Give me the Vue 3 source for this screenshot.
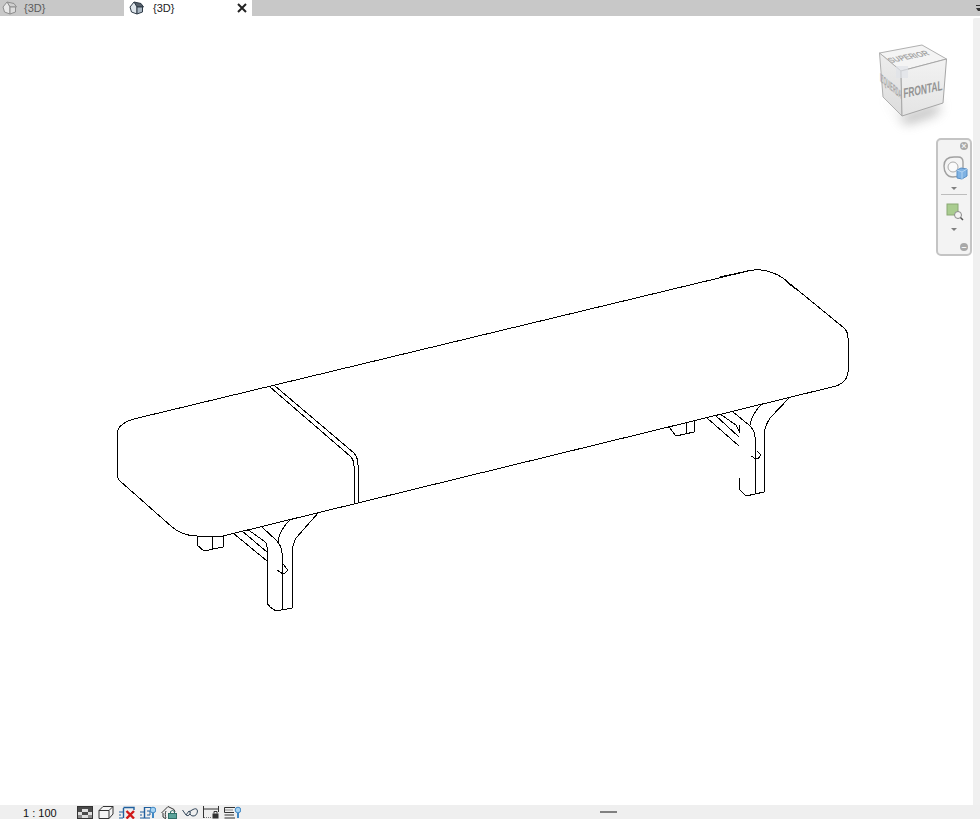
<script setup>
const benchLines = [
  'M138 418 L748 271 C760 268 772 271 783 278 L844 328 Q848 332 848 338 L848 372 Q847 384 832 387 L223 536 L197 536 C185 536 178 532 172 527 L120 481 Q117 478 117 472 L117 435 C117 427 124 421 138 418',
  'M720 277 L752 270',
  'M782 277 L795 289',
  'M848 338 L848 346',
  'M270 387 L350 456 Q354 460 354 466 L354 503',
  'M275 386 L354 453 Q358 458 358 465 L358 503',
  'M197 536 L197 545 L204 551 L223 547 L223 535',
  'M212 536 L212 549',
  'M233 533 L267 561',
  'M242 531 L267 552',
  'M247 529 L264 541 Q267 543 267 547 L267 603 L270 607 L276 611 L292 608 L292 553 Q292 546 296 538 L319 512',
  'M262 527 L277 541 Q282 547 282 553 L282 610',
  'M291 519 Q279 530 278 542',
  'M277 570 L283 574 Q288 572 287 569 L283 564',
  'M669 427 L676 436 L694 432 L694 421',
  'M686 422 L686 434',
  'M707 418 L739 446',
  'M715 415 L739 437',
  'M720 414 L736 425 L740 433 L739 425',
  'M739 478 L739 489 L746 496 L764 492 L764 433 Q765 426 770 418 L790 397',
  'M733 412 L749 425 Q755 431 755 437 L755 493',
  'M763 403 Q752 413 750 425',
  'M751 456 L756 459 Q761 458 760 454 L757 451'
]
</script>

<template>
  <div class="app">
    <header class="tabs">
      <div class="tab">
        <svg class="home" viewBox="0 0 15 14" width="15" height="14">
          <path d="M5 1 L12 2.5 L14.5 6 L8 6 Z" fill="#cfcfcf" stroke="#8e8e8e" />
          <path d="M1 6 L5 1 L8 6 L8 13 L2.5 11 Z" fill="#e8e8e8" stroke="#8e8e8e" />
          <path d="M8 6 L13.5 6 L13.5 11 L8 13 Z" fill="#dcdcdc" stroke="#8e8e8e" />
        </svg>
        <span class="tab-label muted">{3D}</span>
      </div>
      <div class="tab active">
        <svg class="home" viewBox="0 0 15 14" width="15" height="14">
          <path d="M5 1 L12 2.5 L14.5 6 L8 6 Z" fill="#56606a" stroke="#2e3a46" />
          <path d="M1 6 L5 1 L8 6 L8 13 L2.5 11 Z" fill="#dfe6ec" stroke="#2e3a46" />
          <path d="M8 6 L13.5 6 L13.5 11 L8 13 Z" fill="#a9b6c2" stroke="#2e3a46" />
        </svg>
        <span class="tab-label">{3D}</span>
        <svg class="close" viewBox="0 0 10 10" width="10" height="10">
          <path d="M1 1 L9 9 M9 1 L1 9" stroke="#222" stroke-width="2" fill="none" />
        </svg>
      </div>
      <div class="tabs-fill">
        <svg class="tabs-arrow" viewBox="0 0 4 6" width="4" height="6">
          <path d="M0 0 H4 V1 H0 Z M0 3 H4 V6 H2 Z" fill="#333" />
        </svg>
      </div>
    </header>

    <div class="main">
      <section class="canvas">
        <svg class="drawing" viewBox="0 16 973 789" width="973" height="789">
          <path
            v-for="(d, i) in benchLines"
            :key="i"
            :d="d"
            fill="none"
            stroke="#000"
            stroke-width="1"
            shape-rendering="crispEdges"
          />
        </svg>

        <svg class="cube" viewBox="865 35 95 100" width="95" height="100">
          <defs>
            <filter id="cubeBlur" x="-50%" y="-50%" width="200%" height="200%">
              <feGaussianBlur stdDeviation="6" />
            </filter>
            <linearGradient id="faceFront" x1="0" y1="0" x2="0" y2="1">
              <stop offset="0" stop-color="#f2f2f2" />
              <stop offset="1" stop-color="#e4e4e4" />
            </linearGradient>
            <linearGradient id="faceLeft" x1="0" y1="0" x2="0" y2="1">
              <stop offset="0" stop-color="#ededed" />
              <stop offset="1" stop-color="#dcdcdc" />
            </linearGradient>
          </defs>
          <path d="M884 96 L902 116 L942 103 L936 114 L906 124 Z" fill="#8a8a8a" opacity="0.65" filter="url(#cubeBlur)" />
          <path d="M879.5 53 L922 45 L946.5 59 L901 71 Z" fill="#f4f4f4" stroke="#b0b0b0" />
          <path d="M879.5 53 L901 71 L902 116 L883 97 Z" fill="url(#faceLeft)" stroke="#b0b0b0" />
          <path d="M901 71 L946.5 59 L943 103 L902 116 Z" fill="url(#faceFront)" stroke="#a6a6a6" />
          <path d="M896 66 H908 V78 H896 Z" fill="#dfe3e8" opacity="0.7" />
          <text class="cube-label" transform="matrix(0.98 -0.2 0.55 0.55 891 63)" font-size="12" textLength="40" lengthAdjust="spacingAndGlyphs">SUPERIOR</text>
          <text class="cube-label" transform="matrix(0.76 0.65 0 1 880 81)" font-size="12" textLength="28" lengthAdjust="spacingAndGlyphs">IZQUIERDA</text>
          <text class="cube-label front" transform="matrix(0.98 -0.2 0.02 1 903.5 98)" font-size="13.5" textLength="40" lengthAdjust="spacingAndGlyphs">FRONTAL</text>
        </svg>

        <aside class="nav-bar">
          <span class="nav-round close-round">×</span>
          <svg class="wheel" viewBox="0 0 25 24" width="25" height="24">
            <path d="M1 10 C1 4 5 1 11 1 H15 Q20 1 20 6 V12 C20 18 16 21 10 21 C4 21 1 16 1 10 Z" fill="#f4f4f4" stroke="#a0a0a0" stroke-width="1.4" />
            <circle cx="10" cy="11" r="5" fill="#fafafa" stroke="#ababab" />
            <path d="M14 14 L18 12 L24 13 L24 20 L19 23 L14 22 Z" fill="#7fb2e3" stroke="#5a8fc4" />
            <path d="M14 14 L19 16 L24 13 M19 16 L19 23" fill="none" stroke="#b4d4f2" />
          </svg>
          <span class="caret first"></span>
          <span class="nav-rule"></span>
          <svg class="zoom-icon" viewBox="0 0 20 20" width="20" height="20">
            <rect x="1" y="1" width="11" height="11" fill="#a9cc8f" stroke="#8aa874" />
            <circle cx="12" cy="12" r="3.5" fill="#f4f4f4" stroke="#8a8a8a" />
            <path d="M14.5 14.5 L17 17" stroke="#555" stroke-width="1.5" />
          </svg>
          <span class="caret"></span>
          <span class="nav-round minimize-round">–</span>
        </aside>
      </section>
      <div class="side-strip"></div>
    </div>

    <footer class="status">
      <span class="scale">1 : 100</span>
      <div class="status-icons">
        <svg viewBox="0 0 16 13" width="16" height="13">
          <rect x="0.5" y="0.5" width="15" height="12" fill="#ddd" stroke="#333" />
          <path d="M1 1 H15 V3 H1 Z M1 3 H5 V6 H1 Z M11 3 H15 V6 H11 Z M5 6 H11 V9 H5 Z" fill="#4a4a4a" />
          <path d="M1 9 H5 V12 H1 Z M11 9 H15 V12 H11 Z" fill="#8a8a8a" />
        </svg>
        <svg viewBox="0 0 16 13" width="16" height="13">
          <path d="M1 4.5 L5 0.5 H15 V8 L11 12.5 H1 Z M1 4.5 H11 V12.5 M11 4.5 L15 0.5" fill="#f4f4f4" stroke="#333" />
        </svg>
        <svg viewBox="0 0 16 13" width="16" height="13">
          <path d="M0 6 H4 M0 9 H2 M0 12 H4" fill="none" stroke="#1f5f9e" />
          <path d="M4.5 2 V12 M4.5 1.5 H15 V4" fill="none" stroke="#1f5f9e" stroke-width="1.4" />
          <path d="M7.5 5 L15 12.5 M15 5 L7.5 12.5" stroke="#d01818" stroke-width="2.4" />
        </svg>
        <svg viewBox="0 0 16 13" width="16" height="13">
          <path d="M0 6 H4 M0 9 H2 M0 12 H4 M5 1.5 H11 M5 12 H10 M7 5 H10 V9 H7" fill="none" stroke="#1f5f9e" />
          <path d="M4.5 1 V12.5" stroke="#1f5f9e" stroke-width="1.4" />
          <circle cx="13" cy="4" r="2.8" fill="#a9d4f2" stroke="#3f87c4" />
          <path d="M13 7 V12" stroke="#3f87c4" stroke-width="2" />
        </svg>
        <svg viewBox="0 0 16 13" width="16" height="13">
          <path d="M0.5 7 L7 0.5 L13 3.5 L14 6 M2 7 V11 L5 13" fill="#eee" stroke="#333" />
          <path d="M5 5 C4 7 4 10 5 12" fill="none" stroke="#333" />
          <rect x="7.5" y="7.5" width="8" height="5" fill="#5aa39a" stroke="#2f6f68" />
          <path d="M9.5 7.5 V5.5 Q11.5 3.5 13.5 5.5 V7.5" fill="none" stroke="#2f6f68" />
        </svg>
        <svg viewBox="0 0 16 13" width="16" height="13">
          <path d="M0.5 4 L4 9 Q6 11 8 8 Q9 5 7 5 L4 9" fill="none" stroke="#33475b" />
          <path d="M7 6 L10 4 Q15 1 15.5 5 Q15 10 11 10 Q9 10 8 8" fill="none" stroke="#33475b" />
        </svg>
        <svg viewBox="0 0 16 13" width="16" height="13">
          <path d="M0.5 0 V12 M15.5 0 V6 M1 3 H15" fill="none" stroke="#333" />
          <path d="M1 11.5 H8" stroke="#777" stroke-dasharray="1 1" />
          <rect x="9.5" y="7.5" width="6" height="5" fill="#333" />
          <path d="M11 7.5 V5.5 H14 V7.5" fill="none" stroke="#333" />
        </svg>
        <svg viewBox="0 0 17 13" width="17" height="13">
          <path d="M0.5 1.5 H11 M0.5 1.5 V6.5 H10 M0.5 9 H10 M0.5 12 H11" fill="none" stroke="#333" />
          <path d="M1 4 H9" stroke="#888" />
          <circle cx="14" cy="4" r="2.8" fill="#a9d4f2" stroke="#3f87c4" />
          <path d="M14 7 V12" stroke="#3f87c4" stroke-width="2" />
        </svg>
      </div>
      <span class="grip"></span>
    </footer>
  </div>
</template>

<style scoped>
.app {
  width: 980px;
  height: 819px;
  display: flex;
  flex-direction: column;
  background: #fff;
  overflow: hidden;
  font-family: "Liberation Sans", Arial, sans-serif;
}
.tabs {
  flex: 0 0 16px;
  display: flex;
  background: #c8c8c8;
}
.tab {
  width: 124px;
  display: flex;
  align-items: center;
  padding-left: 2px;
  box-sizing: border-box;
  font-size: 11px;
  color: #222;
}
.tab.active {
  width: 128px;
  padding-left: 5px;
  background: #fff;
}
.home {
  flex: none;
}
.tab-label {
  margin-left: 7px;
  line-height: 16px;
}
.tab.active .tab-label {
  margin-left: 9px;
}
.tab-label.muted {
  color: #5c5c5c;
}
.close {
  margin-left: auto;
  margin-right: 5px;
}
.tabs-fill {
  flex: 1;
  display: flex;
  justify-content: flex-end;
  align-items: center;
}
.tabs-arrow {
  display: block;
}
.main {
  flex: 1;
  display: flex;
  min-height: 0;
}
.canvas {
  width: 973px;
  position: relative;
  background: #fff;
}
.drawing {
  display: block;
}
.cube {
  position: absolute;
  left: 865px;
  top: 19px;
}
.cube-label {
  font-family: "Liberation Sans", Arial, sans-serif;
  font-weight: 700;
  fill: #a6a6a6;
}
.cube-label.front {
  fill: #939393;
}
.nav-bar {
  position: absolute;
  top: 122px;
  right: 1px;
  width: 36px;
  height: 118px;
  box-sizing: border-box;
  border: 2px solid #c4c4c4;
  border-radius: 5px;
  background: #f3f3f3;
  display: flex;
  flex-direction: column;
  align-items: center;
  padding: 2px 0 3px;
}
.nav-round {
  align-self: flex-end;
  margin-right: 2px;
  width: 8px;
  height: 8px;
  border-radius: 50%;
  background: #a8a8a8;
  color: #f3f3f3;
  font-size: 9px;
  font-weight: 700;
  line-height: 8px;
  text-align: center;
}
.wheel {
  margin-top: 6px;
  margin-left: 3px;
}
.caret {
  width: 0;
  height: 0;
  margin-top: 5px;
  border-left: 3px solid transparent;
  border-right: 3px solid transparent;
  border-top: 3px solid #808080;
}
.caret.first {
  margin-top: 7px;
}
.nav-rule {
  width: 26px;
  height: 1px;
  margin-top: 4px;
  background: #bdbdbd;
}
.zoom-icon {
  margin-top: 8px;
  margin-left: 4px;
}
.minimize-round {
  margin-top: auto;
}
.side-strip {
  flex: 1;
  margin-top: 2px;
  border-radius: 2px 0 0 0;
  background: #f0f0f0;
}
.status {
  flex: 0 0 14px;
  display: flex;
  align-items: center;
  background: #efefef;
  font-size: 11px;
  color: #111;
}
.scale {
  width: 77px;
  padding-left: 23px;
  box-sizing: border-box;
  line-height: 14px;
  position: relative;
  top: 1px;
}
.status-icons {
  display: flex;
  gap: 5px;
  height: 13px;
}
.status-icons svg {
  display: block;
}
.grip {
  width: 17px;
  height: 2px;
  margin-left: 359px;
  background: #808080;
}
</style>
